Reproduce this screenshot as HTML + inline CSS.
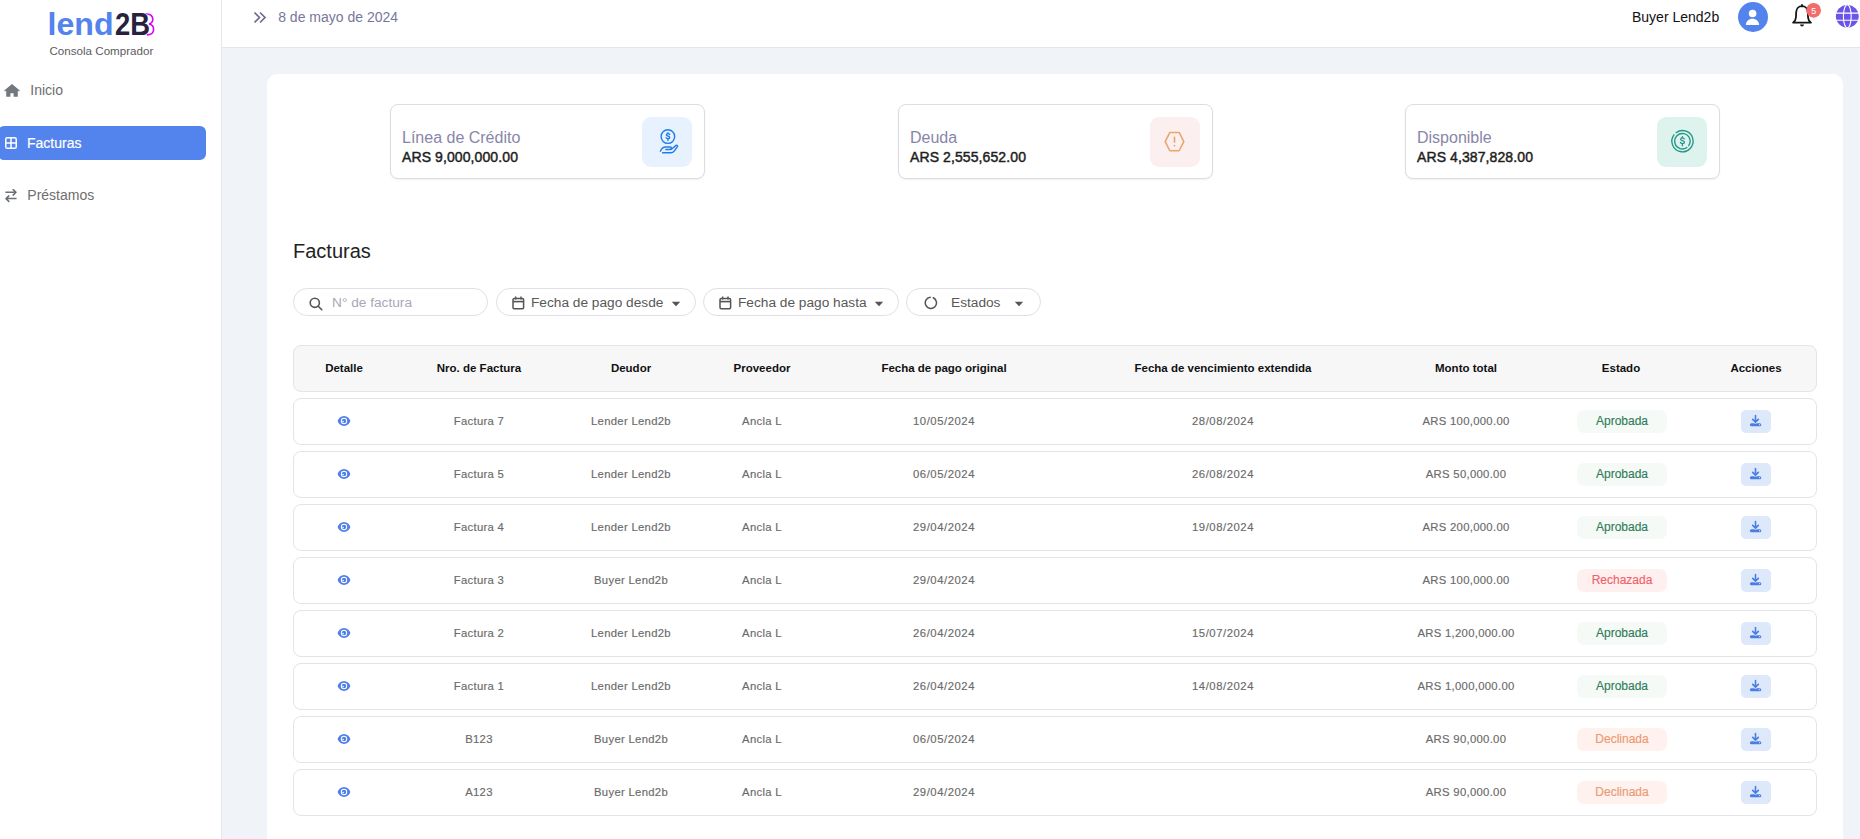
<!DOCTYPE html>
<html><head><meta charset="utf-8">
<style>
*{box-sizing:border-box;margin:0;padding:0}
html,body{width:1860px;height:839px;overflow:hidden;background:#f0f3f8;font-family:"Liberation Sans",sans-serif}
.abs{position:absolute;white-space:nowrap}
#side{position:absolute;left:0;top:0;width:222px;height:839px;background:#fff;border-right:1px solid #e4e7ec}
#hdr{position:absolute;left:222px;top:0;width:1638px;height:48px;background:#fff;border-bottom:1px solid #e2e5ea}
#card{position:absolute;left:267px;top:74px;width:1576px;height:800px;background:#fff;border-radius:10px}
.stat{position:absolute;top:104px;width:315px;height:75px;border:1px solid #dcdde3;border-radius:8px;background:#fff;box-shadow:0 1px 2px rgba(0,0,0,0.06)}
.stat .t{position:absolute;left:11px;top:24px;font-size:16px;color:#8886a8;white-space:nowrap}
.stat .v{position:absolute;left:11px;top:44px;font-size:14px;font-weight:normal;letter-spacing:0.1px;color:#1e1e1e;-webkit-text-stroke:0.45px #1e1e1e;white-space:nowrap}
.stat .ic{position:absolute;width:50px;height:50px;border-radius:9px;top:12px;left:251px}
.stat .ic svg{position:absolute;left:0;top:0}
.pill{position:absolute;top:288px;height:28px;border:1px solid #e0e0e6;border-radius:14px;background:#fff;font-size:13.7px;color:#585858}
.pill span{position:absolute;top:6px;white-space:nowrap}
.pill svg{position:absolute}
.thead{position:absolute;left:293px;top:345px;width:1524px;height:47px;background:#f7f7f8;border:1px solid #e3e4ea;border-radius:8px}
.th{position:absolute;top:0;width:200px;height:45px;line-height:45px;text-align:center;font-size:11.5px;font-weight:bold;color:#111}
.tr{position:absolute;left:293px;width:1524px;height:47px;background:#fff;border:1px solid #e3e4ea;border-radius:8px}
.td{position:absolute;top:0;width:200px;height:45px;line-height:45px;text-align:center;font-size:11.3px;letter-spacing:0.3px;color:#6a6a6a;-webkit-text-stroke:0.15px #6a6a6a}
.td.dt{letter-spacing:0.55px}
.td svg{position:absolute;left:93px;top:16px}
.badge{position:absolute;top:11px;width:90px;height:23px;line-height:23px;text-align:center;font-size:12px;border-radius:7px;-webkit-text-stroke:0.15px currentColor}
.b-ok{background:#f6faf6;color:#2f7d5c}
.b-rej{background:#fff0f0;color:#f25f6a}
.b-dec{background:#fff1ee;color:#eb9a72}
.dlbtn{position:absolute;top:11px;width:30px;height:23px;border-radius:5px;background:#dde8fb}
.dlbtn svg{position:absolute;left:0;top:0}
</style></head><body>
<div id="side">
  <svg class="abs" style="left:0;top:0" width="222" height="60">
    <path d="M145 13.7C150.6 13.7 152.8 16.4 152.8 19.2C152.8 21.8 151.2 23.4 149 24C152 24.6 153.6 26.9 153.6 29.6C153.6 32.9 151 34.9 146.8 34.9" fill="none" stroke="#dc00f8" stroke-width="1.6"/>
    <text x="47.5" y="35" font-family="Liberation Sans" font-weight="bold" font-size="30.5" fill="#5383ec" textLength="66" lengthAdjust="spacingAndGlyphs">lend</text>
    <text x="115" y="35" font-family="Liberation Sans" font-weight="bold" font-size="30.5" fill="#27213f" stroke="#fff" stroke-width="1.2" paint-order="stroke" textLength="35" lengthAdjust="spacingAndGlyphs">2B</text>
  </svg>
  <div class="abs" style="left:49.5px;top:44px;font-size:11.6px;color:#5c5c5c">Consola Comprador</div>
  <svg class="abs" style="left:4.4px;top:84px" width="16" height="13" viewBox="0 0 16 13"><path d="M8 0.1L0.2 6.6l0.9 1L2.2 6.6V12.7h4.2V9.2h3.2v3.5h4.2V6.6l1.1 1 0.9-1z" fill="#73777e"/></svg>
  <div class="abs" style="left:30.3px;top:81.8px;font-size:14px;color:#6e6e6e">Inicio</div>
  <div class="abs" style="left:-2px;top:126px;width:208px;height:34px;background:#5383ec;border-radius:6px"></div>
  <svg class="abs" style="left:5px;top:137px" width="12" height="12" viewBox="0 0 12 12"><rect x="0.75" y="0.75" width="10.5" height="10.5" rx="1.6" fill="none" stroke="#fff" stroke-width="1.5"/><path d="M6 0.75v10.5M0.75 6h10.5" stroke="#fff" stroke-width="1.5"/></svg>
  <div class="abs" style="left:27px;top:135px;font-size:14px;color:#fff;-webkit-text-stroke:0.2px #fff">Facturas</div>
  <svg class="abs" style="left:5px;top:189px" width="13" height="14" viewBox="0 0 13 14"><path d="M0.9 3.3h9.8M8.2 0.6l2.8 2.7-2.8 2.8M11 9.6H1.2M3.8 6.9L1 9.6l2.8 2.8" stroke="#6b6f76" stroke-width="1.5" fill="none" stroke-linecap="round" stroke-linejoin="round"/></svg>
  <div class="abs" style="left:27.3px;top:187px;font-size:14px;color:#6e6e6e">Préstamos</div>
</div>
<div id="hdr">
  <svg class="abs" style="left:31px;top:11px" width="14" height="13" viewBox="0 0 14 13"><path d="M1.5 1.5l5 5-5 5M7 1.5l5 5-5 5" stroke="#6b6b8f" stroke-width="1.7" fill="none"/></svg>
  <div class="abs" style="left:56.2px;top:9px;font-size:14px;color:#77779b">8 de mayo de 2024</div>
  <div class="abs" style="left:1410px;top:9px;font-size:14px;color:#111">Buyer Lend2b</div>
  <svg class="abs" style="left:1516px;top:2px" width="30" height="30" viewBox="0 0 30 30"><circle cx="15" cy="15" r="15" fill="#5383ec"/><circle cx="14.6" cy="11.5" r="3.8" fill="#fff"/><path d="M7.9 23c0-3.6 2.9-6.3 6.6-6.3s6.6 2.7 6.6 6.3z" fill="#fff"/></svg>
  <svg class="abs" style="left:1566.6px;top:2.6px" width="26" height="26" viewBox="0 0 26 26"><path d="M13 3.2c-3.4 0-5.6 2.6-5.8 5.9l-0.3 5.6c-0.1 1.6-1 3.4-2.8 5h17.8c-1.8-1.6-2.7-3.4-2.8-5l-0.3-5.6C18.6 5.8 16.4 3.2 13 3.2z" stroke="#151515" stroke-width="1.8" fill="none" stroke-linejoin="round"/><path d="M13 1.8v1.6" stroke="#151515" stroke-width="1.8" stroke-linecap="round"/><path d="M11 21.6h4c-0.2 1.3-1 2-2 2s-1.8-0.7-2-2z" fill="#151515"/></svg>
  <svg class="abs" style="left:1583px;top:1px" width="18" height="18" viewBox="0 0 18 18"><circle cx="8.6" cy="9.3" r="7.35" fill="#f26c6c"/><text x="8.7" y="12.5" text-anchor="middle" font-family="Liberation Sans" font-size="9" fill="#fff">5</text></svg>
  <svg class="abs" style="left:1613px;top:4px" width="25" height="25" viewBox="0 0 25 25"><circle cx="12.3" cy="12.3" r="11.4" fill="#6a55e8"/><g stroke="#fff" stroke-width="1.1" fill="none"><ellipse cx="12.3" cy="12.3" rx="3.9" ry="11.6"/><path d="M0.5 9.1h23.6M0.5 16.2h23.6"/></g></svg>
</div>
<div id="card"></div>
<div class="stat" style="left:390px"><div class="t">Línea de Crédito</div><div class="v">ARS 9,000,000.00</div><div class="ic" style="background:#e8f2fe"><svg width="50" height="50" viewBox="0 0 50 50"><g fill="none" stroke="#1f7bec" stroke-width="1.4" stroke-linecap="round" stroke-linejoin="round"><circle cx="25.9" cy="19.6" r="6.8"/><path d="M25.9 15.6v1M25.9 22.6v1M27.6 17.5c-0.2-0.6-0.8-0.9-1.6-0.9-0.9 0-1.6 0.5-1.6 1.2 0 1.6 3.3 1 3.3 2.7 0 0.7-0.7 1.2-1.7 1.2-0.9 0-1.5-0.4-1.8-1"/><path d="M18.4 34.2C19.2 31.9 21.2 30 23.8 30H28.1C29.4 30 29.8 31.5 28.8 32.1C28.4 32.4 27.9 32.5 27.3 32.5H23.8"/><path d="M20.6 35.8H28.8C30.2 35.8 31.4 35.2 32.2 34.1L35.4 29.6C36 28.7 35 27.7 34.1 28.4L29.4 32.2"/></g></svg></div></div>
<div class="stat" style="left:898px"><div class="t">Deuda</div><div class="v">ARS 2,555,652.00</div><div class="ic" style="background:#fcefef"><svg width="50" height="50" viewBox="0 0 50 50"><g fill="none" stroke="#eaa56f" stroke-width="1.6" stroke-linejoin="round" stroke-linecap="round"><path d="M19.85 15.45h9.3l4.65 9.15-4.65 9.15h-9.3l-4.65-9.15z"/><path d="M24.5 20.4v4.9"/></g><circle cx="24.5" cy="28.6" r="0.95" fill="#eaa56f"/></svg></div></div>
<div class="stat" style="left:1405px"><div class="t">Disponible</div><div class="v">ARS 4,387,828.00</div><div class="ic" style="background:#dff3ee"><svg width="50" height="50" viewBox="0 0 50 50"><g fill="none" stroke="#23968a" stroke-width="1.35" stroke-linecap="round" stroke-linejoin="round"><path d="M19.1 15.7A10.6 10.6 0 1 1 17 17.8"/><path d="M29.82 30.51A7.7 7.7 0 1 1 31.71 28.62"/><path d="M25.4 19.6v1M25.4 27.6v1.1M27.3 21.9c-0.2-0.7-0.9-1.1-1.8-1.1-1 0-1.8 0.6-1.8 1.4 0 1.8 3.7 1.1 3.7 3 0 0.8-0.8 1.4-1.9 1.4-1 0-1.7-0.5-2-1.2"/></g></svg></div></div>
<div class="abs" style="left:293px;top:240px;font-size:20px;color:#222">Facturas</div>
<div class="pill" style="left:293px;width:195px"><svg style="left:15px;top:8px" width="14" height="14" viewBox="0 0 14 14"><circle cx="5.8" cy="5.8" r="4.6" fill="none" stroke="#555" stroke-width="1.6"/><path d="M9.2 9.2l3.6 3.6" stroke="#555" stroke-width="1.6" stroke-linecap="round"/></svg><span style="left:38px;color:#a8a8b8">N° de factura</span></div>
<div class="pill" style="left:496px;width:200px"><svg style="left:15px;top:7px" width="13" height="14" viewBox="0 0 13 14"><rect x="1" y="2.6" width="10.6" height="10.2" rx="1.2" fill="none" stroke="#555" stroke-width="1.5"/><path d="M1 5.6h10.6" stroke="#555" stroke-width="1.6"/><path d="M3.6 0.5v3M9 0.5v3" stroke="#555" stroke-width="1.5"/></svg><span style="left:34px">Fecha de pago desde</span><svg style="left:174px;top:12px" width="10" height="6" viewBox="0 0 10 6"><path d="M0.8 0.8h8.4L5 5.2z" fill="#555"/></svg></div>
<div class="pill" style="left:703px;width:196px"><svg style="left:15px;top:7px" width="13" height="14" viewBox="0 0 13 14"><rect x="1" y="2.6" width="10.6" height="10.2" rx="1.2" fill="none" stroke="#555" stroke-width="1.5"/><path d="M1 5.6h10.6" stroke="#555" stroke-width="1.6"/><path d="M3.6 0.5v3M9 0.5v3" stroke="#555" stroke-width="1.5"/></svg><span style="left:34px">Fecha de pago hasta</span><svg style="left:170px;top:12px" width="10" height="6" viewBox="0 0 10 6"><path d="M0.8 0.8h8.4L5 5.2z" fill="#555"/></svg></div>
<div class="pill" style="left:906px;width:135px"><svg style="left:17px;top:7px" width="14" height="14" viewBox="0 0 14 14"><path d="M9.3 1.8A5.6 5.6 0 1 1 6.2 1.3" fill="none" stroke="#555" stroke-width="1.5" stroke-linecap="round"/></svg><span style="left:44px">Estados</span><svg style="left:107px;top:12px" width="10" height="6" viewBox="0 0 10 6"><path d="M0.8 0.8h8.4L5 5.2z" fill="#555"/></svg></div>
<div class="thead"><div class="th" style="left:-50px">Detalle</div><div class="th" style="left:85px">Nro. de Factura</div><div class="th" style="left:237px">Deudor</div><div class="th" style="left:368px">Proveedor</div><div class="th" style="left:550px">Fecha de pago original</div><div class="th" style="left:829px">Fecha de vencimiento extendida</div><div class="th" style="left:1072px">Monto total</div><div class="th" style="left:1227px">Estado</div><div class="th" style="left:1362px">Acciones</div></div>
<div class="tr" style="top:398px"><div class="td" style="left:-50px"><svg width="14" height="12" viewBox="0 0 14 12"><path d="M7 1C3.9 1 1.6 3.2 0.6 6c1 2.8 3.3 5 6.4 5s5.4-2.2 6.4-5C12.4 3.2 10.1 1 7 1z" fill="#4f7fe6"/><circle cx="7" cy="6" r="3.2" fill="#fff"/><circle cx="7" cy="6" r="2.2" fill="#4f7fe6"/><circle cx="6.1" cy="6.6" r="0.8" fill="#fff"/></svg></div><div class="td" style="left:85px">Factura 7</div><div class="td" style="left:237px">Lender Lend2b</div><div class="td" style="left:368px">Ancla L</div><div class="td dt" style="left:550px">10/05/2024</div><div class="td dt" style="left:829px">28/08/2024</div><div class="td" style="left:1072px">ARS 100,000.00</div><div class="badge b-ok" style="left:1283px">Aprobada</div><div class="dlbtn" style="left:1447px"><svg width="30" height="23" viewBox="0 0 30 23"><path d="M14.5 5.6v6.4M11.7 9.4l2.8 2.7 2.8-2.7" stroke="#4a7de2" stroke-width="1.6" fill="none" stroke-linecap="round" stroke-linejoin="round"/><rect x="8.9" y="13.2" width="11.4" height="3" rx="1.5" fill="#4a7de2"/><path d="M12.9 13.2h3.2l-1.6 0.9z" fill="#dde8fb"/><circle cx="18.6" cy="14.7" r="0.6" fill="#dde8fb"/></svg></div></div>
<div class="tr" style="top:451px"><div class="td" style="left:-50px"><svg width="14" height="12" viewBox="0 0 14 12"><path d="M7 1C3.9 1 1.6 3.2 0.6 6c1 2.8 3.3 5 6.4 5s5.4-2.2 6.4-5C12.4 3.2 10.1 1 7 1z" fill="#4f7fe6"/><circle cx="7" cy="6" r="3.2" fill="#fff"/><circle cx="7" cy="6" r="2.2" fill="#4f7fe6"/><circle cx="6.1" cy="6.6" r="0.8" fill="#fff"/></svg></div><div class="td" style="left:85px">Factura 5</div><div class="td" style="left:237px">Lender Lend2b</div><div class="td" style="left:368px">Ancla L</div><div class="td dt" style="left:550px">06/05/2024</div><div class="td dt" style="left:829px">26/08/2024</div><div class="td" style="left:1072px">ARS 50,000.00</div><div class="badge b-ok" style="left:1283px">Aprobada</div><div class="dlbtn" style="left:1447px"><svg width="30" height="23" viewBox="0 0 30 23"><path d="M14.5 5.6v6.4M11.7 9.4l2.8 2.7 2.8-2.7" stroke="#4a7de2" stroke-width="1.6" fill="none" stroke-linecap="round" stroke-linejoin="round"/><rect x="8.9" y="13.2" width="11.4" height="3" rx="1.5" fill="#4a7de2"/><path d="M12.9 13.2h3.2l-1.6 0.9z" fill="#dde8fb"/><circle cx="18.6" cy="14.7" r="0.6" fill="#dde8fb"/></svg></div></div>
<div class="tr" style="top:504px"><div class="td" style="left:-50px"><svg width="14" height="12" viewBox="0 0 14 12"><path d="M7 1C3.9 1 1.6 3.2 0.6 6c1 2.8 3.3 5 6.4 5s5.4-2.2 6.4-5C12.4 3.2 10.1 1 7 1z" fill="#4f7fe6"/><circle cx="7" cy="6" r="3.2" fill="#fff"/><circle cx="7" cy="6" r="2.2" fill="#4f7fe6"/><circle cx="6.1" cy="6.6" r="0.8" fill="#fff"/></svg></div><div class="td" style="left:85px">Factura 4</div><div class="td" style="left:237px">Lender Lend2b</div><div class="td" style="left:368px">Ancla L</div><div class="td dt" style="left:550px">29/04/2024</div><div class="td dt" style="left:829px">19/08/2024</div><div class="td" style="left:1072px">ARS 200,000.00</div><div class="badge b-ok" style="left:1283px">Aprobada</div><div class="dlbtn" style="left:1447px"><svg width="30" height="23" viewBox="0 0 30 23"><path d="M14.5 5.6v6.4M11.7 9.4l2.8 2.7 2.8-2.7" stroke="#4a7de2" stroke-width="1.6" fill="none" stroke-linecap="round" stroke-linejoin="round"/><rect x="8.9" y="13.2" width="11.4" height="3" rx="1.5" fill="#4a7de2"/><path d="M12.9 13.2h3.2l-1.6 0.9z" fill="#dde8fb"/><circle cx="18.6" cy="14.7" r="0.6" fill="#dde8fb"/></svg></div></div>
<div class="tr" style="top:557px"><div class="td" style="left:-50px"><svg width="14" height="12" viewBox="0 0 14 12"><path d="M7 1C3.9 1 1.6 3.2 0.6 6c1 2.8 3.3 5 6.4 5s5.4-2.2 6.4-5C12.4 3.2 10.1 1 7 1z" fill="#4f7fe6"/><circle cx="7" cy="6" r="3.2" fill="#fff"/><circle cx="7" cy="6" r="2.2" fill="#4f7fe6"/><circle cx="6.1" cy="6.6" r="0.8" fill="#fff"/></svg></div><div class="td" style="left:85px">Factura 3</div><div class="td" style="left:237px">Buyer Lend2b</div><div class="td" style="left:368px">Ancla L</div><div class="td dt" style="left:550px">29/04/2024</div><div class="td dt" style="left:829px"></div><div class="td" style="left:1072px">ARS 100,000.00</div><div class="badge b-rej" style="left:1283px">Rechazada</div><div class="dlbtn" style="left:1447px"><svg width="30" height="23" viewBox="0 0 30 23"><path d="M14.5 5.6v6.4M11.7 9.4l2.8 2.7 2.8-2.7" stroke="#4a7de2" stroke-width="1.6" fill="none" stroke-linecap="round" stroke-linejoin="round"/><rect x="8.9" y="13.2" width="11.4" height="3" rx="1.5" fill="#4a7de2"/><path d="M12.9 13.2h3.2l-1.6 0.9z" fill="#dde8fb"/><circle cx="18.6" cy="14.7" r="0.6" fill="#dde8fb"/></svg></div></div>
<div class="tr" style="top:610px"><div class="td" style="left:-50px"><svg width="14" height="12" viewBox="0 0 14 12"><path d="M7 1C3.9 1 1.6 3.2 0.6 6c1 2.8 3.3 5 6.4 5s5.4-2.2 6.4-5C12.4 3.2 10.1 1 7 1z" fill="#4f7fe6"/><circle cx="7" cy="6" r="3.2" fill="#fff"/><circle cx="7" cy="6" r="2.2" fill="#4f7fe6"/><circle cx="6.1" cy="6.6" r="0.8" fill="#fff"/></svg></div><div class="td" style="left:85px">Factura 2</div><div class="td" style="left:237px">Lender Lend2b</div><div class="td" style="left:368px">Ancla L</div><div class="td dt" style="left:550px">26/04/2024</div><div class="td dt" style="left:829px">15/07/2024</div><div class="td" style="left:1072px">ARS 1,200,000.00</div><div class="badge b-ok" style="left:1283px">Aprobada</div><div class="dlbtn" style="left:1447px"><svg width="30" height="23" viewBox="0 0 30 23"><path d="M14.5 5.6v6.4M11.7 9.4l2.8 2.7 2.8-2.7" stroke="#4a7de2" stroke-width="1.6" fill="none" stroke-linecap="round" stroke-linejoin="round"/><rect x="8.9" y="13.2" width="11.4" height="3" rx="1.5" fill="#4a7de2"/><path d="M12.9 13.2h3.2l-1.6 0.9z" fill="#dde8fb"/><circle cx="18.6" cy="14.7" r="0.6" fill="#dde8fb"/></svg></div></div>
<div class="tr" style="top:663px"><div class="td" style="left:-50px"><svg width="14" height="12" viewBox="0 0 14 12"><path d="M7 1C3.9 1 1.6 3.2 0.6 6c1 2.8 3.3 5 6.4 5s5.4-2.2 6.4-5C12.4 3.2 10.1 1 7 1z" fill="#4f7fe6"/><circle cx="7" cy="6" r="3.2" fill="#fff"/><circle cx="7" cy="6" r="2.2" fill="#4f7fe6"/><circle cx="6.1" cy="6.6" r="0.8" fill="#fff"/></svg></div><div class="td" style="left:85px">Factura 1</div><div class="td" style="left:237px">Lender Lend2b</div><div class="td" style="left:368px">Ancla L</div><div class="td dt" style="left:550px">26/04/2024</div><div class="td dt" style="left:829px">14/08/2024</div><div class="td" style="left:1072px">ARS 1,000,000.00</div><div class="badge b-ok" style="left:1283px">Aprobada</div><div class="dlbtn" style="left:1447px"><svg width="30" height="23" viewBox="0 0 30 23"><path d="M14.5 5.6v6.4M11.7 9.4l2.8 2.7 2.8-2.7" stroke="#4a7de2" stroke-width="1.6" fill="none" stroke-linecap="round" stroke-linejoin="round"/><rect x="8.9" y="13.2" width="11.4" height="3" rx="1.5" fill="#4a7de2"/><path d="M12.9 13.2h3.2l-1.6 0.9z" fill="#dde8fb"/><circle cx="18.6" cy="14.7" r="0.6" fill="#dde8fb"/></svg></div></div>
<div class="tr" style="top:716px"><div class="td" style="left:-50px"><svg width="14" height="12" viewBox="0 0 14 12"><path d="M7 1C3.9 1 1.6 3.2 0.6 6c1 2.8 3.3 5 6.4 5s5.4-2.2 6.4-5C12.4 3.2 10.1 1 7 1z" fill="#4f7fe6"/><circle cx="7" cy="6" r="3.2" fill="#fff"/><circle cx="7" cy="6" r="2.2" fill="#4f7fe6"/><circle cx="6.1" cy="6.6" r="0.8" fill="#fff"/></svg></div><div class="td" style="left:85px">B123</div><div class="td" style="left:237px">Buyer Lend2b</div><div class="td" style="left:368px">Ancla L</div><div class="td dt" style="left:550px">06/05/2024</div><div class="td dt" style="left:829px"></div><div class="td" style="left:1072px">ARS 90,000.00</div><div class="badge b-dec" style="left:1283px">Declinada</div><div class="dlbtn" style="left:1447px"><svg width="30" height="23" viewBox="0 0 30 23"><path d="M14.5 5.6v6.4M11.7 9.4l2.8 2.7 2.8-2.7" stroke="#4a7de2" stroke-width="1.6" fill="none" stroke-linecap="round" stroke-linejoin="round"/><rect x="8.9" y="13.2" width="11.4" height="3" rx="1.5" fill="#4a7de2"/><path d="M12.9 13.2h3.2l-1.6 0.9z" fill="#dde8fb"/><circle cx="18.6" cy="14.7" r="0.6" fill="#dde8fb"/></svg></div></div>
<div class="tr" style="top:769px"><div class="td" style="left:-50px"><svg width="14" height="12" viewBox="0 0 14 12"><path d="M7 1C3.9 1 1.6 3.2 0.6 6c1 2.8 3.3 5 6.4 5s5.4-2.2 6.4-5C12.4 3.2 10.1 1 7 1z" fill="#4f7fe6"/><circle cx="7" cy="6" r="3.2" fill="#fff"/><circle cx="7" cy="6" r="2.2" fill="#4f7fe6"/><circle cx="6.1" cy="6.6" r="0.8" fill="#fff"/></svg></div><div class="td" style="left:85px">A123</div><div class="td" style="left:237px">Buyer Lend2b</div><div class="td" style="left:368px">Ancla L</div><div class="td dt" style="left:550px">29/04/2024</div><div class="td dt" style="left:829px"></div><div class="td" style="left:1072px">ARS 90,000.00</div><div class="badge b-dec" style="left:1283px">Declinada</div><div class="dlbtn" style="left:1447px"><svg width="30" height="23" viewBox="0 0 30 23"><path d="M14.5 5.6v6.4M11.7 9.4l2.8 2.7 2.8-2.7" stroke="#4a7de2" stroke-width="1.6" fill="none" stroke-linecap="round" stroke-linejoin="round"/><rect x="8.9" y="13.2" width="11.4" height="3" rx="1.5" fill="#4a7de2"/><path d="M12.9 13.2h3.2l-1.6 0.9z" fill="#dde8fb"/><circle cx="18.6" cy="14.7" r="0.6" fill="#dde8fb"/></svg></div></div>
</body></html>
